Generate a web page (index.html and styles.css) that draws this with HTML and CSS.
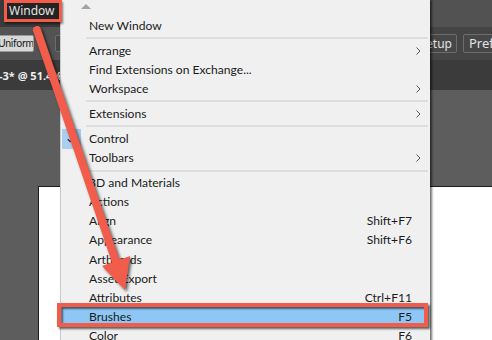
FILE: index.html
```html
<!DOCTYPE html>
<html>
<head>
<meta charset="utf-8">
<link rel="stylesheet" href="styles.css">
</head>
<body>
<div class="app">
  <div class="menubar">
    <div class="mb-item annotated">Window</div>
    <div class="mb-right"></div>
  </div>
  <div class="controlbar">
    <div class="btn light">Uniform</div>
    <div class="btn dark stub"></div>
    <div class="cb-right">
      <div class="btn dark setup">Document Setup</div>
      <div class="btn dark pre">Preferences</div>
    </div>
  </div>
  <div class="tabbar">
    <div class="tab">-3* @ 51.4% (RGB/Preview)</div>
  </div>
  <div class="canvas">
    <div class="artboard"></div>
  </div>
</div>

<div class="menu">
  <div class="scroll-up"></div>
  <div class="row"><span></span><span class="lbl">New Window</span><span></span><span></span></div>
  <div class="sep"></div>
  <div class="row"><span></span><span class="lbl">Arrange</span><span></span><span class="sub"><svg width="5" height="8" viewBox="0 0 5 8"><polyline points="0.5,0.5 4,4 0.5,7.5" fill="none" stroke="#555" stroke-width="1"/></svg></span></div>
  <div class="row"><span></span><span class="lbl">Find Extensions on Exchange...</span><span></span><span></span></div>
  <div class="row"><span></span><span class="lbl">Workspace</span><span></span><span class="sub"><svg width="5" height="8" viewBox="0 0 5 8"><polyline points="0.5,0.5 4,4 0.5,7.5" fill="none" stroke="#555" stroke-width="1"/></svg></span></div>
  <div class="sep"></div>
  <div class="row"><span></span><span class="lbl">Extensions</span><span></span><span class="sub"><svg width="5" height="8" viewBox="0 0 5 8"><polyline points="0.5,0.5 4,4 0.5,7.5" fill="none" stroke="#555" stroke-width="1"/></svg></span></div>
  <div class="sep"></div>
  <div class="row"><span class="check"><svg width="9" height="7" viewBox="0 0 9 7"><polyline points="0.8,3.2 3.3,5.6 8.2,0.8" fill="none" stroke="#222" stroke-width="1.2"/></svg></span><span class="lbl">Control</span><span></span><span></span></div>
  <div class="row"><span></span><span class="lbl">Toolbars</span><span></span><span class="sub"><svg width="5" height="8" viewBox="0 0 5 8"><polyline points="0.5,0.5 4,4 0.5,7.5" fill="none" stroke="#555" stroke-width="1"/></svg></span></div>
  <div class="sep"></div>
  <div class="row"><span></span><span class="lbl">3D and Materials</span><span></span><span></span></div>
  <div class="row"><span></span><span class="lbl">Actions</span><span></span><span></span></div>
  <div class="row"><span></span><span class="lbl">Align</span><span class="key">Shift+F7</span><span></span></div>
  <div class="row"><span></span><span class="lbl">Appearance</span><span class="key">Shift+F6</span><span></span></div>
  <div class="row"><span></span><span class="lbl">Artboards</span><span></span><span></span></div>
  <div class="row"><span></span><span class="lbl">Asset Export</span><span></span><span></span></div>
  <div class="row"><span></span><span class="lbl">Attributes</span><span class="key">Ctrl+F11</span><span></span></div>
  <div class="row hl"><span></span><span class="lbl">Brushes</span><span class="key">F5</span><span></span></div>
  <div class="row"><span></span><span class="lbl">Color</span><span class="key">F6</span><span></span></div>
</div>

<svg class="arrow" width="492" height="340" viewBox="0 0 492 340">
  <line x1="37" y1="30" x2="116" y2="262" stroke="#f25c4b" stroke-width="8" stroke-linecap="round"/>
  <polygon points="125,290 130,256 102,266" fill="#f25c4b"/>
</svg>
</body>
</html>
```

FILE: styles.css
```css
html, body {
  margin: 0;
  padding: 0;
}
body {
  width: 492px;
  height: 340px;
  overflow: hidden;
  position: relative;
  font-family: "Noto Sans", "DejaVu Sans", sans-serif;
  background: #5d5d5d;
}
.app {
  display: flex;
  flex-direction: column;
  height: 340px;
}
.menubar {
  height: 27px;
  display: flex;
  align-items: flex-start;
  background: #3a3a3a;
  flex: none;
}
.mb-item {
  color: #e4e4e4;
  font-size: 12px;
  line-height: 16px;
  padding: 0 6px;
}
.mb-item.annotated {
  position: relative;
  z-index: 5;
  margin-left: 4px;
  width: 58px;
  height: 22px;
  box-sizing: border-box;
  border: 3px solid #f25c4b;
  background: #232323;
  padding: 0 0 0 2px;
  line-height: 15px;
  box-shadow: 1px 2px 2px rgba(0,0,0,.5);
}
.mb-right {
  margin-left: auto;
  width: 62px;
  height: 27px;
  background: #525252;
}
.controlbar {
  height: 33px;
  flex: none;
  display: flex;
  align-items: center;
  background: #535353;
}
.btn {
  height: 17px;
  box-sizing: border-box;
  font-size: 11px;
  line-height: 15px;
  padding: 0 4px;
  border-radius: 2px;
  white-space: nowrap;
  overflow: hidden;
}
.btn.light {
  background: #d8d8d8;
  color: #1c1c1c;
  border: 1px solid #9a9a9a;
  margin-left: -3px;
  width: 37px;
  padding: 0;
  font-family: "Lato", "Noto Sans", sans-serif;
  font-size: 10.5px;
  letter-spacing: -0.3px;
  text-align: right;
  padding-right: 2px;
}
.btn.dark {
  background: #474747;
  color: #e2e2e2;
  border: 1px solid #6c6c6c;
}
.btn.stub {
  width: 20px;
  margin-left: 21px;
}
.cb-right {
  margin-left: auto;
  width: 62px;
  height: 33px;
  background: #454545;
  display: flex;
  align-items: center;
  gap: 6px;
  overflow: hidden;
  flex: none;
}
.btn.setup {
  flex: none;
  width: 58px;
  margin-left: -31px;
  height: 19px;
  font-size: 12px;
  line-height: 17px;
  direction: rtl;
  text-align: left;
}
.btn.pre {
  flex: none;
  height: 19px;
  font-size: 13px;
  line-height: 17px;
  padding-left: 5px;
}
.tabbar {
  height: 30px;
  flex: none;
  background: #3b3b3b;
  display: flex;
  align-items: center;
}
.tab {
  color: #f0f0f0;
  font-size: 11px;
  font-weight: 700;
  white-space: nowrap;
  padding-left: 0;
  margin-left: -1px;
}
.canvas {
  flex: 1;
  display: flex;
  padding: 96px 0 0 38px;
  background: #5d5d5d;
}
.artboard {
  flex: 1;
  background: #ffffff;
  border-top: 1px solid #1c1c1c;
  border-left: 1px solid #1c1c1c;
}

/* dropdown menu */
.menu {
  position: absolute;
  left: 60px;
  top: 0;
  width: 370px;
  height: 360px;
  box-sizing: border-box;
  padding-top: 16px;
  background: #f0f0f0;
  border-left: 1px solid #c9c9c9;
  box-shadow: 2px 0 2px rgba(0,0,0,.55);
  font-family: "Lato", "Noto Sans", sans-serif;
  font-size: 12.1px;
  color: #1b1b1b;
  z-index: 4;
}
.scroll-up {
  position: absolute;
  left: 20px;
  top: 4px;
  width: 0;
  height: 0;
  border-left: 5px solid transparent;
  border-right: 5px solid transparent;
  border-bottom: 5px solid #a4a4a4;
}
.row {
  display: grid;
  grid-template-columns: 28px 1fr auto 18px;
  height: 19.1px;
  align-items: center;
  position: relative;
  white-space: nowrap;
}
.row .lbl {
  line-height: 16px;
}
.row .key {
  line-height: 16px;
}
.sub {
  display: flex;
  align-items: center;
  justify-content: flex-start;
  padding-left: 4px;
}
.check {
  width: 19px;
  height: 100%;
  margin-left: 1px;
  background: #a9cef1;
  display: flex;
  align-items: center;
  justify-content: center;
}
.sep {
  height: 2px;
  margin: 2px 2px 2px 25px;
  background: #dedede;
}
.row.hl {
  background: #8ec7f5;
  margin: 0 2px 0 1px;
  grid-template-columns: 27px 1fr auto 16px;
}
.row.hl::after {
  content: "";
  position: absolute;
  left: -5px;
  right: 0;
  top: -4px;
  bottom: -1px;
  border: 4px solid #f25c4b;
  box-shadow: 2px 2px 2px rgba(0,0,0,.6), inset 2px 2px 2px rgba(0,0,0,.55);
}
.arrow {
  position: absolute;
  left: 0;
  top: 0;
  z-index: 10;
  pointer-events: none;
  filter: drop-shadow(2px 2px 1.5px rgba(0,0,0,.6));
}
```
